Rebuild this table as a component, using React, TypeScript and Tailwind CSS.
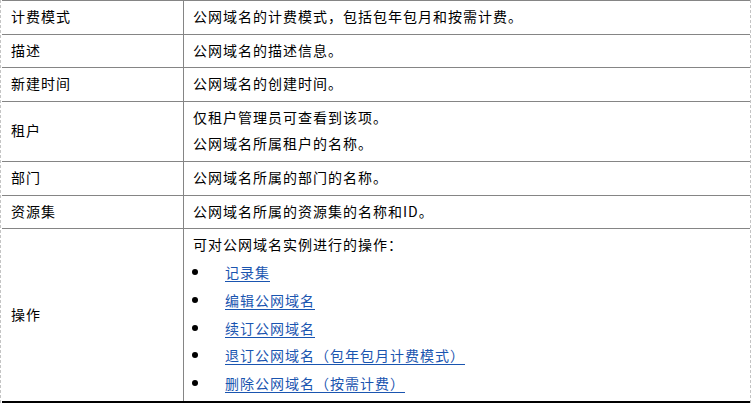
import { FC, ReactNode } from 'react';

const rows: { label: string; body: ReactNode }[] = [
  { label: '计费模式', body: <p>公网域名的计费模式，包括包年包月和按需计费。</p> },
  { label: '描述', body: <p>公网域名的描述信息。</p> },
  { label: '新建时间', body: <p>公网域名的创建时间。</p> },
  {
    label: '租户',
    body: (
      <>
        <p>仅租户管理员可查看到该项。</p>
        <p className="mt-[6.33px]">公网域名所属租户的名称。</p>
      </>
    ),
  },
  { label: '部门', body: <p>公网域名所属的部门的名称。</p> },
  { label: '资源集', body: <p>公网域名所属的资源集的名称和ID。</p> },
];

const actions = [
  '记录集',
  '编辑公网域名',
  '续订公网域名',
  '退订公网域名（包年包月计费模式）',
  '删除公网域名（按需计费）',
];

const Dashed: FC = () => (
  <div className="w-px shrink-0 self-stretch bg-[repeating-linear-gradient(to_bottom,#c4c4c4_0_3px,transparent_3px_5px)]" />
);

const Row: FC<{ label: string; children: ReactNode; last?: boolean }> = ({ label, children, last }) => (
  <div className={`flex border-t border-[#858585] ${last ? 'border-b-2 border-b-black' : ''}`}>
    <div className="flex w-[182px] shrink-0 items-center border-r border-[#858585] pl-[9px] pt-[5px] pb-[7.67px]">
      {label}
    </div>
    <div className="flex-1 pl-[9px] pt-[5px] pb-[7.67px]">{children}</div>
  </div>
);

const App: FC = () => {
  return (
    <div
      className="flex h-[404px] w-[751px] bg-white text-[14px] leading-[20px] tracking-[1px] text-black"
      style={{ fontFamily: '"Noto Sans CJK SC", "Noto Sans", sans-serif' }}
    >
      <Dashed />
      <div className="w-px shrink-0" />
      <div className="w-[748px] shrink-0">
        {rows.map((r) => (
          <Row key={r.label} label={r.label}>
            {r.body}
          </Row>
        ))}
        <Row label="操作" last>
          <p>可对公网域名实例进行的操作：</p>
          <ul>
            {actions.map((a) => (
              <li key={a} className="mt-[7.8px] flex items-center">
                <span className="-ml-px mr-[27px] h-[6px] w-[6px] shrink-0 rounded-full bg-black" />
                <a href="#" className="text-[#1a55b0] underline underline-offset-[3px]">
                  {a}
                </a>
              </li>
            ))}
          </ul>
        </Row>
      </div>
      <Dashed />
    </div>
  );
};

export default App;
